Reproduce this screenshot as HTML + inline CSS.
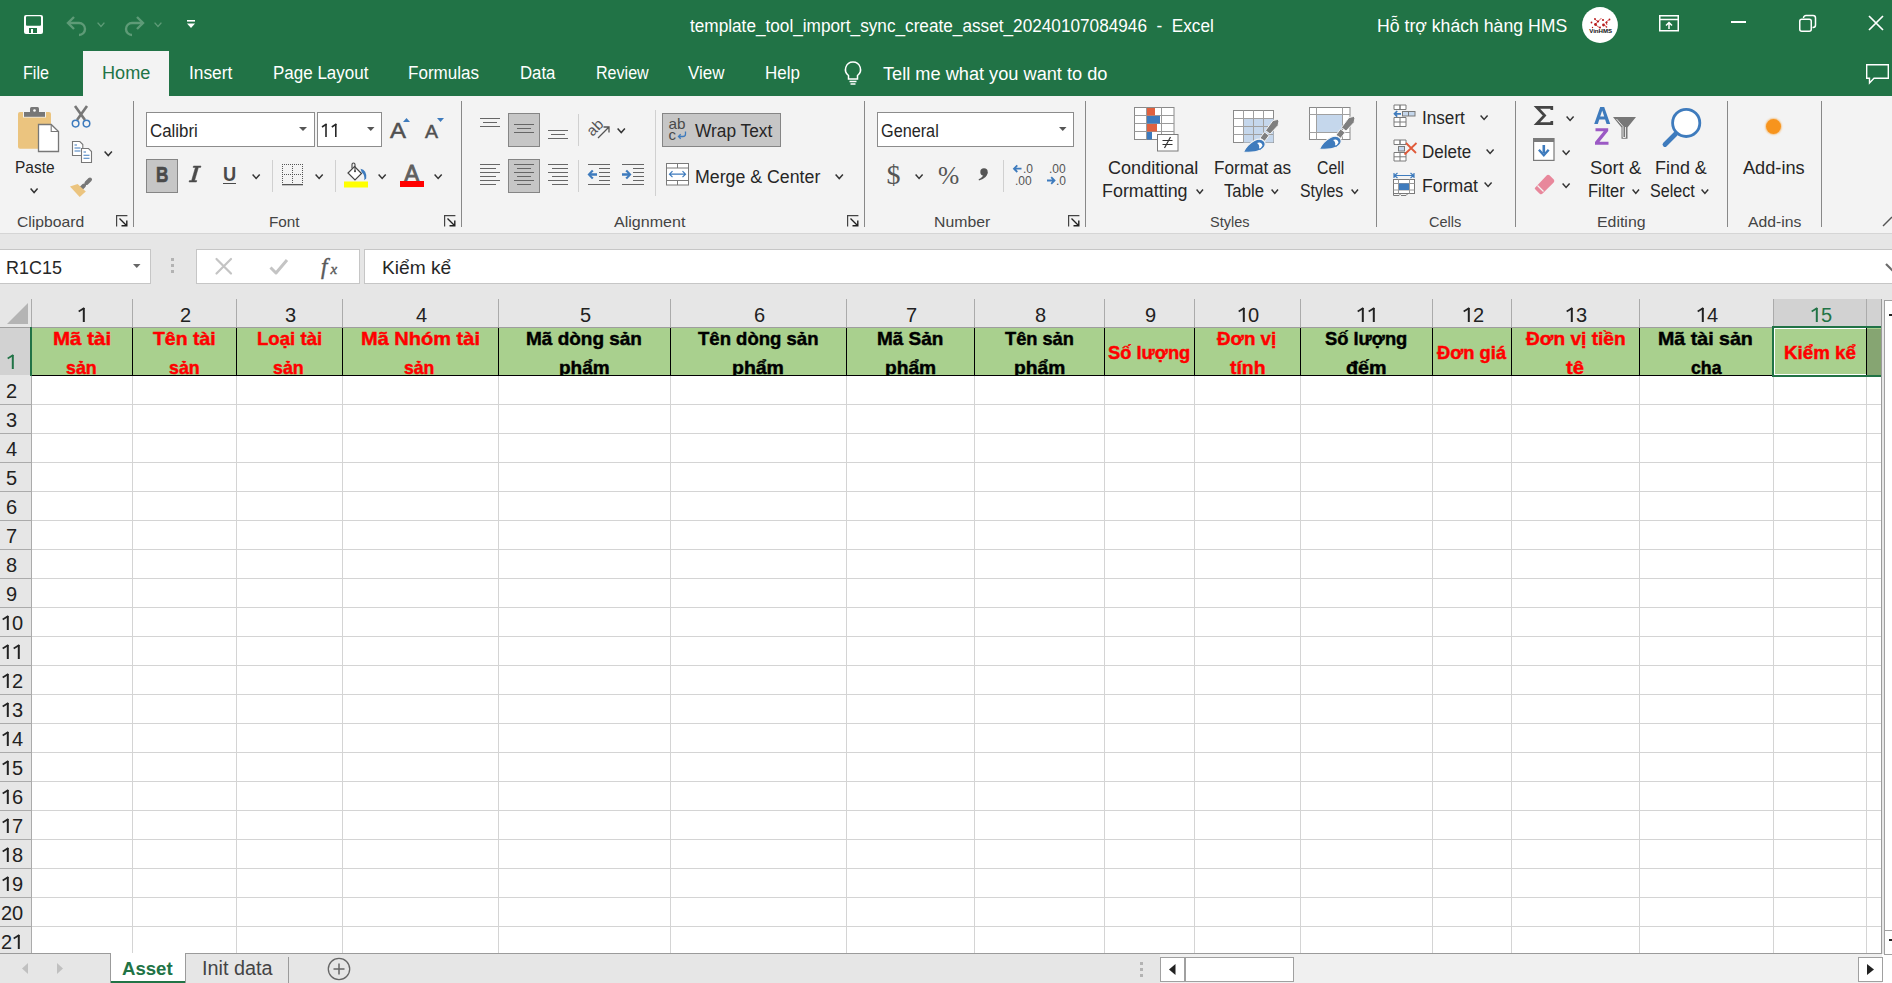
<!DOCTYPE html>
<html><head><meta charset="utf-8"><style>
html,body{margin:0;padding:0;}
body{width:1892px;height:983px;overflow:hidden;position:relative;background:#fff;font-family:"Liberation Sans", sans-serif;}
div{position:absolute;box-sizing:border-box;}
svg text{white-space:pre;}
</style></head><body>
<div style="left:0px;top:0px;width:1892px;height:96px;background:#217346"></div>
<svg style="position:absolute;left:24px;top:15px;overflow:visible;" width="19" height="19" viewBox="0 0 19 19"><rect x="0" y="0" width="19" height="19" rx="2" fill="#fff"/><rect x="2" y="1.2" width="15" height="9.6" rx="1" fill="#217346"/><rect x="5" y="13" width="8" height="5" fill="#217346"/><rect x="7" y="14" width="2" height="4" fill="#fff"/></svg>
<svg style="position:absolute;left:65px;top:15px;overflow:visible;" width="24" height="20" viewBox="0 0 24 20"><path d="M3 8 H14 A6 6 0 0 1 14 20" fill="none" stroke="#5e9b77" stroke-width="2.4"/><path d="M9 2 L3 8 L9 14" fill="none" stroke="#5e9b77" stroke-width="2.4"/></svg>
<svg style="position:absolute;left:97px;top:22px;overflow:visible;" width="8" height="5" viewBox="0 0 8 5"><path d="M0.6 0.6 L4.0 4.4 L7.4 0.6" fill="none" stroke="#5e9b77" stroke-width="1.4"/></svg>
<svg style="position:absolute;left:122px;top:15px;overflow:visible;" width="24" height="20" viewBox="0 0 24 20"><path d="M21 8 H10 A6 6 0 0 0 10 20" fill="none" stroke="#5e9b77" stroke-width="2.4"/><path d="M15 2 L21 8 L15 14" fill="none" stroke="#5e9b77" stroke-width="2.4"/></svg>
<svg style="position:absolute;left:154px;top:22px;overflow:visible;" width="8" height="5" viewBox="0 0 8 5"><path d="M0.6 0.6 L4.0 4.4 L7.4 0.6" fill="none" stroke="#5e9b77" stroke-width="1.4"/></svg>
<svg style="position:absolute;left:187px;top:20px;overflow:visible;" width="9" height="10" viewBox="0 0 9 10"><rect x="0" y="0" width="8" height="1.6" fill="#fff"/><path d="M0 3.5 H8 L4 8 Z" fill="#fff"/></svg>
<svg style="position:absolute;left:688.40px;top:11.00px;overflow:visible" width="527.8" height="28.0"><text x="2" y="21.00" font-size="17.5" font-family="Liberation Sans" font-weight="normal" fill="#fff" textLength="523.84" lengthAdjust="spacingAndGlyphs" >template_tool_import_sync_create_asset_20240107084946&#160;&#160;-&#160;&#160;Excel</text></svg>
<svg style="position:absolute;left:1374.70px;top:10.50px;overflow:visible" width="194.2" height="28.0"><text x="2" y="21.00" font-size="17.5" font-family="Liberation Sans" font-weight="normal" fill="#fff" textLength="190.20" lengthAdjust="spacingAndGlyphs" >Hỗ trợ khách hàng HMS</text></svg>
<svg style="position:absolute;left:1582px;top:7px;overflow:visible;" width="36" height="36" viewBox="0 0 36 36"><circle cx="18" cy="18" r="17.9" fill="#fff"/><path d="M12.5 12 L16 14.5 L19.5 11 M16 14.5 L13 17.5 L18 21 M22 17.5 L24.5 20 M24 15 L27.5 12.5 M24 15 L25 18" stroke="#c62828" stroke-width="0.9" fill="none" opacity="0.85"/><g fill="#b71c1c"><circle cx="9.5" cy="15.5" r="0.9"/><circle cx="13" cy="12" r="0.9"/><circle cx="16" cy="14.5" r="1.1"/><circle cx="13.5" cy="17.5" r="1.4"/><circle cx="18" cy="20.5" r="1"/><circle cx="21" cy="13" r="1.1"/><circle cx="21.5" cy="18" r="1.4"/><circle cx="24.5" cy="20" r="0.8"/><circle cx="24.5" cy="15.5" r="1.1"/><circle cx="27.5" cy="12.5" r="0.9"/><circle cx="10.5" cy="20.5" r="0.7"/></g><text x="7.2" y="26.3" font-size="6.2" font-family="Liberation Sans" font-weight="bold" fill="#111" textLength="23" lengthAdjust="spacingAndGlyphs">VinHMS</text></svg>
<svg style="position:absolute;left:1659px;top:15px;overflow:visible;" width="20" height="17" viewBox="0 0 20 17"><rect x="0.75" y="0.75" width="18.5" height="15" fill="none" stroke="#fff" stroke-width="1.5"/><path d="M0.75 4.5 H19" stroke="#fff" stroke-width="1.5"/><path d="M10 14 V7.5 M7 10.5 L10 7.5 L13 10.5" fill="none" stroke="#fff" stroke-width="1.5"/></svg>
<div style="left:1731px;top:21px;width:15px;height:2px;background:#fff"></div>
<svg style="position:absolute;left:1799px;top:14px;overflow:visible;" width="18" height="19" viewBox="0 0 18 19"><rect x="0.75" y="5.25" width="11.5" height="12" rx="2" fill="none" stroke="#fff" stroke-width="1.5"/><path d="M4.5 4 A2.5 2.5 0 0 1 7 1.5 H14 A2.5 2.5 0 0 1 16.5 4 V11 A2.5 2.5 0 0 1 14 13.5 H13.5" fill="none" stroke="#fff" stroke-width="1.5"/></svg>
<svg style="position:absolute;left:1868px;top:15px;overflow:visible;" width="16" height="16" viewBox="0 0 16 16"><path d="M1 1 L15 15 M15 1 L1 15" stroke="#fff" stroke-width="1.7"/></svg>
<div style="left:83px;top:51px;width:86px;height:45px;background:#f3f3f3"></div>
<svg style="position:absolute;left:21.30px;top:57.20px;overflow:visible" width="30.0" height="28.8"><text x="2" y="21.60" font-size="18" font-family="Liberation Sans" font-weight="normal" fill="#fff" textLength="26.00" lengthAdjust="spacingAndGlyphs" >File</text></svg>
<svg style="position:absolute;left:99.70px;top:57.20px;overflow:visible" width="52.3" height="28.8"><text x="2" y="21.60" font-size="18" font-family="Liberation Sans" font-weight="normal" fill="#217346" textLength="48.31" lengthAdjust="spacingAndGlyphs" >Home</text></svg>
<svg style="position:absolute;left:187.30px;top:57.20px;overflow:visible" width="47.3" height="28.8"><text x="2" y="21.60" font-size="18" font-family="Liberation Sans" font-weight="normal" fill="#fff" textLength="43.32" lengthAdjust="spacingAndGlyphs" >Insert</text></svg>
<svg style="position:absolute;left:270.60px;top:57.20px;overflow:visible" width="99.4" height="28.8"><text x="2" y="21.60" font-size="18" font-family="Liberation Sans" font-weight="normal" fill="#fff" textLength="95.39" lengthAdjust="spacingAndGlyphs" >Page Layout</text></svg>
<svg style="position:absolute;left:405.80px;top:57.20px;overflow:visible" width="75.0" height="28.8"><text x="2" y="21.60" font-size="18" font-family="Liberation Sans" font-weight="normal" fill="#fff" textLength="71.01" lengthAdjust="spacingAndGlyphs" >Formulas</text></svg>
<svg style="position:absolute;left:517.90px;top:57.20px;overflow:visible" width="39.4" height="28.8"><text x="2" y="21.60" font-size="18" font-family="Liberation Sans" font-weight="normal" fill="#fff" textLength="35.43" lengthAdjust="spacingAndGlyphs" >Data</text></svg>
<svg style="position:absolute;left:593.80px;top:57.20px;overflow:visible" width="56.7" height="28.8"><text x="2" y="21.60" font-size="18" font-family="Liberation Sans" font-weight="normal" fill="#fff" textLength="52.73" lengthAdjust="spacingAndGlyphs" >Review</text></svg>
<svg style="position:absolute;left:686.00px;top:57.20px;overflow:visible" width="40.4" height="28.8"><text x="2" y="21.60" font-size="18" font-family="Liberation Sans" font-weight="normal" fill="#fff" textLength="36.40" lengthAdjust="spacingAndGlyphs" >View</text></svg>
<svg style="position:absolute;left:762.70px;top:57.20px;overflow:visible" width="38.9" height="28.8"><text x="2" y="21.60" font-size="18" font-family="Liberation Sans" font-weight="normal" fill="#fff" textLength="34.92" lengthAdjust="spacingAndGlyphs" >Help</text></svg>
<svg style="position:absolute;left:844px;top:61px;overflow:visible;" width="18" height="24" viewBox="0 0 18 24"><path d="M9 1 A7.5 7.5 0 0 0 4.5 14.5 V18 H13.5 V14.5 A7.5 7.5 0 0 0 9 1 Z" fill="none" stroke="#fff" stroke-width="1.5"/><path d="M5.5 20.5 H12.5 M6.5 23 H11.5" stroke="#fff" stroke-width="1.5"/></svg>
<svg style="position:absolute;left:880.60px;top:57.50px;overflow:visible" width="228.4" height="28.8"><text x="2" y="21.60" font-size="18" font-family="Liberation Sans" font-weight="normal" fill="#fff" textLength="224.42" lengthAdjust="spacingAndGlyphs" >Tell me what you want to do</text></svg>
<svg style="position:absolute;left:1866px;top:64px;overflow:visible;" width="23" height="22" viewBox="0 0 23 22"><path d="M0.7 0.7 H22.3 V14.3 H8 L3.5 19 V14.3 H0.7 Z" fill="none" stroke="#fff" stroke-width="1.4"/></svg>
<div style="left:0px;top:96px;width:1892px;height:137px;background:#f3f3f3"></div>
<div style="left:0px;top:233px;width:1892px;height:1px;background:#d5d5d5"></div>
<div style="left:133px;top:101px;width:1px;height:126px;background:#888888"></div>
<div style="left:461px;top:101px;width:1px;height:126px;background:#888888"></div>
<div style="left:864px;top:101px;width:1px;height:126px;background:#888888"></div>
<div style="left:1085px;top:101px;width:1px;height:126px;background:#888888"></div>
<div style="left:1376px;top:101px;width:1px;height:126px;background:#888888"></div>
<div style="left:1515px;top:101px;width:1px;height:126px;background:#888888"></div>
<div style="left:1727px;top:101px;width:1px;height:126px;background:#888888"></div>
<div style="left:1821px;top:101px;width:1px;height:126px;background:#888888"></div>
<svg style="position:absolute;left:14.50px;top:209.00px;overflow:visible" width="71.2" height="24.0"><text x="2" y="18.00" font-size="15" font-family="Liberation Sans" font-weight="normal" fill="#444444" textLength="67.20" lengthAdjust="spacingAndGlyphs" >Clipboard</text></svg>
<svg style="position:absolute;left:267.40px;top:209.00px;overflow:visible" width="34.6" height="24.0"><text x="2" y="18.00" font-size="15" font-family="Liberation Sans" font-weight="normal" fill="#444444" textLength="30.61" lengthAdjust="spacingAndGlyphs" >Font</text></svg>
<svg style="position:absolute;left:612.40px;top:209.00px;overflow:visible" width="75.4" height="24.0"><text x="2" y="18.00" font-size="15" font-family="Liberation Sans" font-weight="normal" fill="#444444" textLength="71.40" lengthAdjust="spacingAndGlyphs" >Alignment</text></svg>
<svg style="position:absolute;left:931.80px;top:209.00px;overflow:visible" width="60.2" height="24.0"><text x="2" y="18.00" font-size="15" font-family="Liberation Sans" font-weight="normal" fill="#444444" textLength="56.25" lengthAdjust="spacingAndGlyphs" >Number</text></svg>
<svg style="position:absolute;left:1208.10px;top:209.00px;overflow:visible" width="43.5" height="24.0"><text x="2" y="18.00" font-size="15" font-family="Liberation Sans" font-weight="normal" fill="#444444" textLength="39.55" lengthAdjust="spacingAndGlyphs" >Styles</text></svg>
<svg style="position:absolute;left:1427.20px;top:209.00px;overflow:visible" width="36.3" height="24.0"><text x="2" y="18.00" font-size="15" font-family="Liberation Sans" font-weight="normal" fill="#444444" textLength="32.34" lengthAdjust="spacingAndGlyphs" >Cells</text></svg>
<svg style="position:absolute;left:1595.00px;top:209.00px;overflow:visible" width="52.6" height="24.0"><text x="2" y="18.00" font-size="15" font-family="Liberation Sans" font-weight="normal" fill="#444444" textLength="48.56" lengthAdjust="spacingAndGlyphs" >Editing</text></svg>
<svg style="position:absolute;left:1745.60px;top:209.00px;overflow:visible" width="57.4" height="24.0"><text x="2" y="18.00" font-size="15" font-family="Liberation Sans" font-weight="normal" fill="#444444" textLength="53.36" lengthAdjust="spacingAndGlyphs" >Add-ins</text></svg>
<svg style="position:absolute;left:116px;top:215px;overflow:visible;" width="12" height="12" viewBox="0 0 12 12"><path d="M0.6 11.4 V0.6 H11.4" fill="none" stroke="#444" stroke-width="1.2"/><path d="M3.5 3.5 L10.5 10.5 M5.5 10.8 H10.8 V5.5" fill="none" stroke="#222" stroke-width="1.4"/></svg>
<svg style="position:absolute;left:444px;top:215px;overflow:visible;" width="12" height="12" viewBox="0 0 12 12"><path d="M0.6 11.4 V0.6 H11.4" fill="none" stroke="#444" stroke-width="1.2"/><path d="M3.5 3.5 L10.5 10.5 M5.5 10.8 H10.8 V5.5" fill="none" stroke="#222" stroke-width="1.4"/></svg>
<svg style="position:absolute;left:847px;top:215px;overflow:visible;" width="12" height="12" viewBox="0 0 12 12"><path d="M0.6 11.4 V0.6 H11.4" fill="none" stroke="#444" stroke-width="1.2"/><path d="M3.5 3.5 L10.5 10.5 M5.5 10.8 H10.8 V5.5" fill="none" stroke="#222" stroke-width="1.4"/></svg>
<svg style="position:absolute;left:1068px;top:215px;overflow:visible;" width="12" height="12" viewBox="0 0 12 12"><path d="M0.6 11.4 V0.6 H11.4" fill="none" stroke="#444" stroke-width="1.2"/><path d="M3.5 3.5 L10.5 10.5 M5.5 10.8 H10.8 V5.5" fill="none" stroke="#222" stroke-width="1.4"/></svg>
<svg style="position:absolute;left:1881px;top:216px;overflow:visible;" width="11" height="11" viewBox="0 0 11 11"><path d="M2 10 L11 1" stroke="#555" stroke-width="1.4"/></svg>
<svg style="position:absolute;left:17px;top:106px;overflow:visible;" width="44" height="47" viewBox="0 0 44 47"><rect x="1" y="6" width="33" height="36.8" rx="2" fill="#ebc47f"/><rect x="6" y="4.5" width="23" height="7" fill="#f3f3f3"/><rect x="7" y="6" width="21" height="4.8" fill="#777777"/><rect x="13" y="1" width="9" height="6" rx="1.5" fill="#777777"/><circle cx="17.5" cy="4.5" r="1.3" fill="#fff"/><path d="M21.5 18.5 H34.2 L41.5 25.5 V45.5 H21.5 Z" fill="#fff" stroke="#777777" stroke-width="1.3"/><path d="M34.2 18.5 V25.5 H41.5" fill="none" stroke="#777777" stroke-width="1.1"/></svg>
<svg style="position:absolute;left:13.10px;top:153.30px;overflow:visible" width="43.6" height="27.2"><text x="2" y="20.40" font-size="17" font-family="Liberation Sans" font-weight="normal" fill="#262626" textLength="39.57" lengthAdjust="spacingAndGlyphs" >Paste</text></svg>
<svg style="position:absolute;left:30.1px;top:187.8px;overflow:visible;" width="8.2" height="5.2" viewBox="0 0 8.2 5.2"><path d="M0.6 0.6 L4.1 4.6000000000000005 L7.6 0.6" fill="none" stroke="#333" stroke-width="1.5"/></svg>
<svg style="position:absolute;left:70px;top:105px;overflow:visible;" width="22" height="24" viewBox="0 0 22 24"><path d="M5 1 L15 15 M17 1 L7 15" stroke="#777777" stroke-width="2.6"/><circle cx="5.6" cy="18.6" r="3.3" fill="#f3f3f3" stroke="#3e7bbd" stroke-width="1.5"/><circle cx="16.5" cy="18.6" r="3.3" fill="#f3f3f3" stroke="#3e7bbd" stroke-width="1.5"/></svg>
<svg style="position:absolute;left:71px;top:140px;overflow:visible;" width="23" height="24" viewBox="0 0 23 24"><path d="M1.5 1.5 H8.8 L11.8 4.5 V15.5 H1.5 Z" fill="#fff" stroke="#777777" stroke-width="1.1"/><path d="M3.5 5 H6 M3.5 8 H9.5 M3.5 11 H9.5" stroke="#3e7bbd" stroke-width="1.1"/><path d="M10.5 8.5 H17.5 L20.5 11.5 V22.5 H10.5 Z" fill="#fff" stroke="#777777" stroke-width="1.1"/><path d="M12.5 12 H15 M12.5 15.2 H18.5 M12.5 18.2 H18.5" stroke="#3e7bbd" stroke-width="1.1"/></svg>
<svg style="position:absolute;left:104px;top:150.8px;overflow:visible;" width="8.5" height="5.2" viewBox="0 0 8.5 5.2"><path d="M0.6 0.6 L4.25 4.6000000000000005 L7.9 0.6" fill="none" stroke="#333" stroke-width="1.5"/></svg>
<svg style="position:absolute;left:69px;top:177px;overflow:visible;" width="24" height="22" viewBox="0 0 24 22"><path d="M21 2.5 L17.5 6 M15 8.5 L10.5 13" stroke="#777777" stroke-width="4" stroke-linecap="round"/><path d="M1 9.4 L8.6 6.9 L16.8 14.5 L10.7 20.1 Z" fill="#ebc47f"/></svg>
<div style="left:146px;top:112px;width:169px;height:35px;background:#fff;border:1px solid #8c8c8c"></div>
<svg style="position:absolute;left:147.60px;top:116.00px;overflow:visible" width="51.9" height="28.0"><text x="2" y="21.00" font-size="17.5" font-family="Liberation Sans" font-weight="normal" fill="#262626" textLength="47.89" lengthAdjust="spacingAndGlyphs" >Calibri</text></svg>
<svg style="position:absolute;left:299px;top:127px;overflow:visible;" width="8" height="4" viewBox="0 0 8 4"><path d="M0 0 H8 L4.0 4 Z" fill="#555"/></svg>
<div style="left:317px;top:112px;width:65px;height:35px;background:#fff;border:1px solid #8c8c8c"></div>
<svg style="position:absolute;left:320px;top:122px;overflow:visible;" width="20" height="16" viewBox="0 0 20 16"><path d="M6 2 V15 M15.8 2 V15" stroke="#262626" stroke-width="1.6"/><path d="M2 5 L6.6 2 M11.8 5 L16.4 2" stroke="#262626" stroke-width="1.5"/></svg>
<svg style="position:absolute;left:367px;top:127px;overflow:visible;" width="7.5" height="4" viewBox="0 0 7.5 4"><path d="M0 0 H7.5 L3.75 4 Z" fill="#555"/></svg>
<svg style="position:absolute;left:388.00px;top:111.60px;overflow:visible" width="20.0" height="35.2"><text x="2" y="26.40" font-size="22" font-family="Liberation Sans" font-weight="normal" fill="#505050" textLength="15.97" lengthAdjust="spacingAndGlyphs" stroke="#505050" stroke-width="0.5">A</text></svg>
<svg style="position:absolute;left:403px;top:118px;overflow:visible;" width="7" height="4" viewBox="0 0 7 4"><path d="M0 4 L3.5 0 L7 4 Z" fill="#3e7bbd"/></svg>
<svg style="position:absolute;left:423.00px;top:116.40px;overflow:visible" width="17.0" height="28.8"><text x="2" y="21.60" font-size="18" font-family="Liberation Sans" font-weight="normal" fill="#505050" textLength="13.01" lengthAdjust="spacingAndGlyphs" stroke="#505050" stroke-width="0.5">A</text></svg>
<svg style="position:absolute;left:437px;top:118px;overflow:visible;" width="7" height="4" viewBox="0 0 7 4"><path d="M0 0 H7 L3.5 4 Z" fill="#3e7bbd"/></svg>
<div style="left:146px;top:159px;width:32px;height:34px;background:#c6c6c6;border:1px solid #858585"></div>
<svg style="position:absolute;left:153.80px;top:155.60px;overflow:visible" width="16.4" height="35.2"><text x="2" y="26.40" font-size="22" font-family="Liberation Sans" font-weight="bold" fill="#4a4a4a" textLength="12.39" lengthAdjust="spacingAndGlyphs" stroke="#4a4a4a" stroke-width="0.6">B</text></svg>
<svg style="position:absolute;left:188px;top:165px;overflow:visible;" width="14" height="18" viewBox="0 0 14 18"><path d="M5.5 1 H13 L12.6 2.4 H10.4 L6.6 15.6 H8.8 L8.4 17 H1 L1.4 15.6 H3.6 L7.4 2.4 H5.1 Z" fill="#4a4a4a" stroke="#4a4a4a" stroke-width="0.5"/></svg>
<svg style="position:absolute;left:220.80px;top:156.30px;overflow:visible" width="17.2" height="33.6"><text x="2" y="25.20" font-size="21" font-family="Liberation Sans" font-weight="bold" fill="#4a4a4a" textLength="13.17" lengthAdjust="spacingAndGlyphs" >U</text></svg>
<div style="left:223px;top:182.5px;width:13px;height:1.6px;background:#4a4a4a"></div>
<svg style="position:absolute;left:252px;top:174.2px;overflow:visible;" width="8.3" height="5" viewBox="0 0 8.3 5"><path d="M0.6 0.6 L4.15 4.4 L7.700000000000001 0.6" fill="none" stroke="#333" stroke-width="1.5"/></svg>
<div style="left:272px;top:160px;width:1px;height:32px;background:#d0d0d0"></div>
<svg style="position:absolute;left:282px;top:164px;overflow:visible;" width="22" height="22" viewBox="0 0 22 22"><rect x="0" y="0" width="1" height="1" fill="#555"/><rect x="0" y="10" width="1" height="1" fill="#555"/><rect x="0" y="0" width="1" height="1" fill="#555"/><rect x="10" y="0" width="1" height="1" fill="#555"/><rect x="20" y="0" width="1" height="1" fill="#555"/><rect x="2" y="0" width="1" height="1" fill="#555"/><rect x="2" y="10" width="1" height="1" fill="#555"/><rect x="0" y="2" width="1" height="1" fill="#555"/><rect x="10" y="2" width="1" height="1" fill="#555"/><rect x="20" y="2" width="1" height="1" fill="#555"/><rect x="4" y="0" width="1" height="1" fill="#555"/><rect x="4" y="10" width="1" height="1" fill="#555"/><rect x="0" y="4" width="1" height="1" fill="#555"/><rect x="10" y="4" width="1" height="1" fill="#555"/><rect x="20" y="4" width="1" height="1" fill="#555"/><rect x="6" y="0" width="1" height="1" fill="#555"/><rect x="6" y="10" width="1" height="1" fill="#555"/><rect x="0" y="6" width="1" height="1" fill="#555"/><rect x="10" y="6" width="1" height="1" fill="#555"/><rect x="20" y="6" width="1" height="1" fill="#555"/><rect x="8" y="0" width="1" height="1" fill="#555"/><rect x="8" y="10" width="1" height="1" fill="#555"/><rect x="0" y="8" width="1" height="1" fill="#555"/><rect x="10" y="8" width="1" height="1" fill="#555"/><rect x="20" y="8" width="1" height="1" fill="#555"/><rect x="10" y="0" width="1" height="1" fill="#555"/><rect x="10" y="10" width="1" height="1" fill="#555"/><rect x="0" y="10" width="1" height="1" fill="#555"/><rect x="10" y="10" width="1" height="1" fill="#555"/><rect x="20" y="10" width="1" height="1" fill="#555"/><rect x="12" y="0" width="1" height="1" fill="#555"/><rect x="12" y="10" width="1" height="1" fill="#555"/><rect x="0" y="12" width="1" height="1" fill="#555"/><rect x="10" y="12" width="1" height="1" fill="#555"/><rect x="20" y="12" width="1" height="1" fill="#555"/><rect x="14" y="0" width="1" height="1" fill="#555"/><rect x="14" y="10" width="1" height="1" fill="#555"/><rect x="0" y="14" width="1" height="1" fill="#555"/><rect x="10" y="14" width="1" height="1" fill="#555"/><rect x="20" y="14" width="1" height="1" fill="#555"/><rect x="16" y="0" width="1" height="1" fill="#555"/><rect x="16" y="10" width="1" height="1" fill="#555"/><rect x="0" y="16" width="1" height="1" fill="#555"/><rect x="10" y="16" width="1" height="1" fill="#555"/><rect x="20" y="16" width="1" height="1" fill="#555"/><rect x="18" y="0" width="1" height="1" fill="#555"/><rect x="18" y="10" width="1" height="1" fill="#555"/><rect x="0" y="18" width="1" height="1" fill="#555"/><rect x="10" y="18" width="1" height="1" fill="#555"/><rect x="20" y="18" width="1" height="1" fill="#555"/><rect x="20" y="0" width="1" height="1" fill="#555"/><rect x="20" y="10" width="1" height="1" fill="#555"/><rect x="0" y="20" width="1" height="1" fill="#555"/><rect x="10" y="20" width="1" height="1" fill="#555"/><rect x="20" y="20" width="1" height="1" fill="#555"/><rect x="0" y="20" width="21" height="1.3" fill="#555"/></svg>
<svg style="position:absolute;left:315px;top:174.2px;overflow:visible;" width="8.3" height="5" viewBox="0 0 8.3 5"><path d="M0.6 0.6 L4.15 4.4 L7.700000000000001 0.6" fill="none" stroke="#333" stroke-width="1.5"/></svg>
<div style="left:335px;top:160px;width:1px;height:32px;background:#d0d0d0"></div>
<svg style="position:absolute;left:344px;top:162px;overflow:visible;" width="26" height="26" viewBox="0 0 26 26"><path d="M10.5 4.5 L17.5 11.5 L11 18 L4 11 Z" fill="#fff" stroke="#444" stroke-width="1.2"/><path d="M8 6.5 V2.5 A1.5 1.5 0 0 1 11 2.5 V9" fill="none" stroke="#444" stroke-width="1.1"/><circle cx="11" cy="9.3" r="1" fill="#444"/><path d="M16.5 6.8 Q23 8 22.2 16.5 L20.2 18.3 Q21 12.5 17.8 10.5 Z" fill="#3e7bbd"/><rect x="0" y="19.5" width="24" height="6" fill="#ffff00"/></svg>
<svg style="position:absolute;left:378px;top:174.2px;overflow:visible;" width="8.3" height="5" viewBox="0 0 8.3 5"><path d="M0.6 0.6 L4.15 4.4 L7.700000000000001 0.6" fill="none" stroke="#333" stroke-width="1.5"/></svg>
<svg style="position:absolute;left:402.00px;top:153.20px;overflow:visible" width="19.5" height="38.4"><text x="2" y="28.80" font-size="24" font-family="Liberation Sans" font-weight="normal" fill="#606060" textLength="15.51" lengthAdjust="spacingAndGlyphs" stroke="#606060" stroke-width="0.9">A</text></svg>
<div style="left:400px;top:181px;width:24px;height:6px;background:#ff0000"></div>
<svg style="position:absolute;left:434px;top:174.2px;overflow:visible;" width="8.3" height="5" viewBox="0 0 8.3 5"><path d="M0.6 0.6 L4.15 4.4 L7.700000000000001 0.6" fill="none" stroke="#333" stroke-width="1.5"/></svg>
<div style="left:508px;top:113px;width:32px;height:34px;background:#c6c6c6;border:1px solid #858585"></div>
<div style="left:508px;top:159px;width:32px;height:34px;background:#c6c6c6;border:1px solid #858585"></div>
<div style="left:480px;top:118px;width:20px;height:1px;background:#666666"></div>
<div style="left:483px;top:122px;width:14px;height:1px;background:#666666"></div>
<div style="left:480px;top:126px;width:20px;height:1px;background:#666666"></div>
<div style="left:514px;top:124px;width:20px;height:1px;background:#666666"></div>
<div style="left:517px;top:128px;width:14px;height:1px;background:#666666"></div>
<div style="left:514px;top:132px;width:20px;height:1px;background:#666666"></div>
<div style="left:548px;top:130px;width:20px;height:1px;background:#666666"></div>
<div style="left:551px;top:134px;width:14px;height:1px;background:#666666"></div>
<div style="left:548px;top:138px;width:20px;height:1px;background:#666666"></div>
<div style="left:578px;top:114px;width:1px;height:32px;background:#d0d0d0"></div>
<svg style="position:absolute;left:586px;top:118px;overflow:visible;" width="26" height="24" viewBox="0 0 26 24"><text x="0" y="0" font-size="15" font-family="Liberation Sans" fill="#555" transform="translate(6.5 19) rotate(-45)">ab</text><path d="M12 20 L23 9 M17.5 9 H23 V14.5" fill="none" stroke="#555" stroke-width="1.3"/></svg>
<svg style="position:absolute;left:617px;top:127.5px;overflow:visible;" width="8.5" height="5.2" viewBox="0 0 8.5 5.2"><path d="M0.6 0.6 L4.25 4.6000000000000005 L7.9 0.6" fill="none" stroke="#333" stroke-width="1.5"/></svg>
<div style="left:655px;top:110px;width:1px;height:86px;background:#d0d0d0"></div>
<div style="left:662px;top:113px;width:119px;height:34px;background:#c6c6c6;border:1px solid #858585"></div>
<svg style="position:absolute;left:668px;top:116px;overflow:visible;" width="24" height="26" viewBox="0 0 24 26"><text x="0.5" y="13" font-size="15" font-family="Liberation Sans" fill="#4a4a4a" textLength="17" lengthAdjust="spacingAndGlyphs">ab</text><text x="0.5" y="23.5" font-size="15" font-family="Liberation Sans" fill="#4a4a4a">c</text><path d="M17.5 15.5 V18 Q17.5 20.5 15 20.5 H10.5 M12.7 18.3 L10.5 20.5 L12.7 22.7" fill="none" stroke="#3e7bbd" stroke-width="1.3"/></svg>
<svg style="position:absolute;left:692.70px;top:115.60px;overflow:visible" width="81.3" height="28.0"><text x="2" y="21.00" font-size="17.5" font-family="Liberation Sans" font-weight="normal" fill="#262626" textLength="77.34" lengthAdjust="spacingAndGlyphs" >Wrap Text</text></svg>
<div style="left:480px;top:164px;width:20px;height:1px;background:#666666"></div>
<div style="left:514px;top:164px;width:20px;height:1px;background:#666666"></div>
<div style="left:548px;top:164px;width:20px;height:1px;background:#666666"></div>
<div style="left:480px;top:168px;width:16px;height:1px;background:#666666"></div>
<div style="left:517px;top:168px;width:14px;height:1px;background:#666666"></div>
<div style="left:552px;top:168px;width:16px;height:1px;background:#666666"></div>
<div style="left:480px;top:172px;width:20px;height:1px;background:#666666"></div>
<div style="left:514px;top:172px;width:20px;height:1px;background:#666666"></div>
<div style="left:548px;top:172px;width:20px;height:1px;background:#666666"></div>
<div style="left:480px;top:176px;width:16px;height:1px;background:#666666"></div>
<div style="left:517px;top:176px;width:14px;height:1px;background:#666666"></div>
<div style="left:552px;top:176px;width:16px;height:1px;background:#666666"></div>
<div style="left:480px;top:180px;width:20px;height:1px;background:#666666"></div>
<div style="left:514px;top:180px;width:20px;height:1px;background:#666666"></div>
<div style="left:548px;top:180px;width:20px;height:1px;background:#666666"></div>
<div style="left:480px;top:184px;width:16px;height:1px;background:#666666"></div>
<div style="left:517px;top:184px;width:14px;height:1px;background:#666666"></div>
<div style="left:552px;top:184px;width:16px;height:1px;background:#666666"></div>
<div style="left:578px;top:160px;width:1px;height:32px;background:#d0d0d0"></div>
<div style="left:588px;top:164px;width:22px;height:1px;background:#666666"></div>
<div style="left:622px;top:164px;width:22px;height:1px;background:#666666"></div>
<div style="left:599px;top:168px;width:11px;height:1px;background:#666666"></div>
<div style="left:633px;top:168px;width:11px;height:1px;background:#666666"></div>
<div style="left:599px;top:172px;width:11px;height:1px;background:#666666"></div>
<div style="left:633px;top:172px;width:11px;height:1px;background:#666666"></div>
<div style="left:599px;top:176px;width:11px;height:1px;background:#666666"></div>
<div style="left:633px;top:176px;width:11px;height:1px;background:#666666"></div>
<div style="left:599px;top:180px;width:11px;height:1px;background:#666666"></div>
<div style="left:633px;top:180px;width:11px;height:1px;background:#666666"></div>
<div style="left:588px;top:184px;width:22px;height:1px;background:#666666"></div>
<div style="left:622px;top:184px;width:22px;height:1px;background:#666666"></div>
<svg style="position:absolute;left:587px;top:169px;overflow:visible;" width="11" height="11" viewBox="0 0 11 11"><path d="M0.5 5.5 L5 0.8 L6.6 2.3 L4.3 4.3 H10 V6.7 H4.3 L6.6 8.7 L5 10.2 Z" fill="#3e7bbd"/></svg>
<svg style="position:absolute;left:621px;top:169px;overflow:visible;" width="11" height="11" viewBox="0 0 11 11"><path d="M10.5 5.5 L6 0.8 L4.4 2.3 L6.7 4.3 H1 V6.7 H6.7 L4.4 8.7 L6 10.2 Z" fill="#3e7bbd"/></svg>
<svg style="position:absolute;left:666px;top:163px;overflow:visible;" width="23" height="23" viewBox="0 0 23 23"><rect x="0.5" y="0.5" width="22" height="21.5" fill="#fff" stroke="#7a7a7a"/><path d="M0.5 5 H22.5 M0.5 17.5 H22.5 M11.5 0.5 V5 M11.5 17.5 V22" stroke="#7a7a7a"/><path d="M3.5 11.2 H19.5 M6.5 8.2 L3.5 11.2 L6.5 14.2 M16.5 8.2 L19.5 11.2 L16.5 14.2" fill="none" stroke="#3e7bbd" stroke-width="1.2"/></svg>
<svg style="position:absolute;left:692.70px;top:161.70px;overflow:visible" width="129.3" height="28.0"><text x="2" y="21.00" font-size="17.5" font-family="Liberation Sans" font-weight="normal" fill="#262626" textLength="125.33" lengthAdjust="spacingAndGlyphs" >Merge &amp; Center</text></svg>
<svg style="position:absolute;left:835px;top:174px;overflow:visible;" width="8.5" height="5.2" viewBox="0 0 8.5 5.2"><path d="M0.6 0.6 L4.25 4.6000000000000005 L7.9 0.6" fill="none" stroke="#333" stroke-width="1.5"/></svg>
<div style="left:877px;top:112px;width:197px;height:35px;background:#fff;border:1px solid #8c8c8c"></div>
<svg style="position:absolute;left:878.70px;top:116.00px;overflow:visible" width="61.8" height="28.0"><text x="2" y="21.00" font-size="17.5" font-family="Liberation Sans" font-weight="normal" fill="#262626" textLength="57.76" lengthAdjust="spacingAndGlyphs" >General</text></svg>
<svg style="position:absolute;left:1059px;top:127px;overflow:visible;" width="7.5" height="4" viewBox="0 0 7.5 4"><path d="M0 0 H7.5 L3.75 4 Z" fill="#555"/></svg>
<svg style="position:absolute;left:884px;top:158px" width="22" height="32"><text x="2.5" y="26" font-size="28" font-family="Liberation Serif" fill="#555">$</text></svg>
<svg style="position:absolute;left:915.2px;top:174px;overflow:visible;" width="8.2" height="5" viewBox="0 0 8.2 5"><path d="M0.6 0.6 L4.1 4.4 L7.6 0.6" fill="none" stroke="#333" stroke-width="1.5"/></svg>
<svg style="position:absolute;left:935px;top:158px" width="28" height="32"><text x="3" y="26" font-size="25.5" font-family="Liberation Serif" fill="#555">%</text></svg>
<svg style="position:absolute;left:978px;top:168px;overflow:visible;" width="10" height="13" viewBox="0 0 10 13"><circle cx="6" cy="4" r="3.7" fill="#555"/><path d="M9.6 4 Q9.6 10 1 12.5 L0.6 11.3 Q5 9 5.5 6.5 Z" fill="#555"/></svg>
<div style="left:1003px;top:160px;width:1px;height:32px;background:#d0d0d0"></div>
<svg style="position:absolute;left:1012px;top:163px;overflow:visible;" width="24" height="24" viewBox="0 0 24 24"><path d="M9.5 5.7 H2 M5.3 2.4 L2 5.7 L5.3 9" fill="none" stroke="#3e7bbd" stroke-width="1.8"/><text x="11" y="10" font-size="12" font-family="Liberation Sans" fill="#555">.0</text><text x="3" y="22" font-size="12" font-family="Liberation Sans" fill="#555">.00</text></svg>
<svg style="position:absolute;left:1046px;top:163px;overflow:visible;" width="24" height="24" viewBox="0 0 24 24"><text x="3" y="10" font-size="12" font-family="Liberation Sans" fill="#555">.00</text><path d="M1 17.5 H8.5 M5.2 14.2 L8.5 17.5 L5.2 20.8" fill="none" stroke="#3e7bbd" stroke-width="1.8"/><text x="10" y="22" font-size="12" font-family="Liberation Sans" fill="#555">.0</text></svg>
<svg style="position:absolute;left:1134px;top:107px;overflow:visible;" width="45" height="45" viewBox="0 0 45 45"><rect x="0.5" y="0.5" width="39.5" height="32" fill="#fff" stroke="#8a8a8a"/><path d="M0.5 8.5 H40 M0.5 16.5 H40 M0.5 24.5 H40 M12.5 0.5 V32.5 M27.5 0.5 V32.5" stroke="#9a9a9a"/><rect x="13" y="1" width="8" height="7.5" fill="#e0613f"/><rect x="13" y="9" width="13" height="7.5" fill="#3e7bbd"/><rect x="13" y="17" width="10" height="7.5" fill="#e0613f"/><rect x="13" y="25" width="5" height="7.5" fill="#3e7bbd"/><rect x="23.5" y="27.5" width="20.5" height="16.5" fill="#fff" stroke="#7a7a7a"/><path d="M28.5 33.5 H38.5 M28.5 37.5 H38.5 M36.5 30 L30.5 41" stroke="#333" stroke-width="1.2"/></svg>
<svg style="position:absolute;left:1106.40px;top:152.80px;overflow:visible" width="94.4" height="28.0"><text x="2" y="21.00" font-size="17.5" font-family="Liberation Sans" font-weight="normal" fill="#262626" textLength="90.36" lengthAdjust="spacingAndGlyphs" >Conditional</text></svg>
<svg style="position:absolute;left:1100.30px;top:176.20px;overflow:visible" width="89.5" height="28.0"><text x="2" y="21.00" font-size="17.5" font-family="Liberation Sans" font-weight="normal" fill="#262626" textLength="85.54" lengthAdjust="spacingAndGlyphs" >Formatting</text></svg>
<svg style="position:absolute;left:1195.8px;top:188.5px;overflow:visible;" width="7.6" height="5" viewBox="0 0 7.6 5"><path d="M0.6 0.6 L3.8 4.4 L7.0 0.6" fill="none" stroke="#333" stroke-width="1.5"/></svg>
<svg style="position:absolute;left:1233px;top:108px;overflow:visible;" width="48" height="46" viewBox="0 0 48 46"><rect x="0.5" y="2.5" width="40" height="32" fill="#fff" stroke="#8a8a8a"/><rect x="10.5" y="10.5" width="30" height="24" fill="#c5d7ec"/><path d="M0.5 10.5 H40 M0.5 18.5 H40 M0.5 26.5 H40 M10.5 2.5 V34 M20.5 2.5 V34 M30.5 2.5 V34" stroke="#a0a0a0"/><path d="M46 13 L44.5 11.5 L40 12.5 L32.5 22.5 L37 26 L45 17.5 Z" fill="#7f7f7f" stroke="#f3f3f3" stroke-width="1"/><path d="M31.5 24 L36 27.5 L31.5 33.5 L27 30 Z" fill="#7f7f7f" stroke="#f3f3f3" stroke-width="1"/><path d="M10.5 44 Q14 36.5 21.5 32.5 Q27.5 29.5 31.5 33.5 Q34 38.5 28 42 Q21 45 10.5 44 Z" fill="#3e7bbd" stroke="#f3f3f3" stroke-width="1.2"/><path d="M24 35 Q28.5 33.5 29.5 37.5 Q28.5 40 26 40.5 Q27 37 24 35 Z" fill="#fff"/></svg>
<svg style="position:absolute;left:1211.90px;top:152.80px;overflow:visible" width="81.2" height="28.0"><text x="2" y="21.00" font-size="17.5" font-family="Liberation Sans" font-weight="normal" fill="#262626" textLength="77.17" lengthAdjust="spacingAndGlyphs" >Format as</text></svg>
<svg style="position:absolute;left:1222.10px;top:176.20px;overflow:visible" width="43.9" height="28.0"><text x="2" y="21.00" font-size="17.5" font-family="Liberation Sans" font-weight="normal" fill="#262626" textLength="39.93" lengthAdjust="spacingAndGlyphs" >Table</text></svg>
<svg style="position:absolute;left:1270.6px;top:188.5px;overflow:visible;" width="7.6" height="5" viewBox="0 0 7.6 5"><path d="M0.6 0.6 L3.8 4.4 L7.0 0.6" fill="none" stroke="#333" stroke-width="1.5"/></svg>
<svg style="position:absolute;left:1309px;top:107px;overflow:visible;" width="48" height="46" viewBox="0 0 48 46"><rect x="0.5" y="0.5" width="40.5" height="32" fill="#fff" stroke="#8a8a8a"/><rect x="7.5" y="7.5" width="26" height="18" fill="#c5d7ec"/><path d="M0.5 7.5 H41 M0.5 25.5 H41 M7.5 0.5 V32.5 M33.5 0.5 V32.5" stroke="#a0a0a0"/><path d="M46 11 L44.5 9.5 L40 10.5 L32.5 20.5 L37 24 L45 15.5 Z" fill="#7f7f7f" stroke="#f3f3f3" stroke-width="1"/><path d="M31.5 22 L36 25.5 L31.5 31.5 L27 28 Z" fill="#7f7f7f" stroke="#f3f3f3" stroke-width="1"/><path d="M10.5 42 Q14 34.5 21.5 30.5 Q27.5 27.5 31.5 31.5 Q34 36.5 28 40 Q21 43 10.5 42 Z" fill="#3e7bbd" stroke="#f3f3f3" stroke-width="1.2"/><path d="M24 33 Q28.5 31.5 29.5 35.5 Q28.5 38 26 38.5 Q27 35 24 33 Z" fill="#fff"/></svg>
<svg style="position:absolute;left:1314.50px;top:152.80px;overflow:visible" width="31.2" height="28.0"><text x="2" y="21.00" font-size="17.5" font-family="Liberation Sans" font-weight="normal" fill="#262626" textLength="27.24" lengthAdjust="spacingAndGlyphs" >Cell</text></svg>
<svg style="position:absolute;left:1297.70px;top:176.20px;overflow:visible" width="47.2" height="28.0"><text x="2" y="21.00" font-size="17.5" font-family="Liberation Sans" font-weight="normal" fill="#262626" textLength="43.16" lengthAdjust="spacingAndGlyphs" >Styles</text></svg>
<svg style="position:absolute;left:1350.6px;top:188.5px;overflow:visible;" width="7.6" height="5" viewBox="0 0 7.6 5"><path d="M0.6 0.6 L3.8 4.4 L7.0 0.6" fill="none" stroke="#333" stroke-width="1.5"/></svg>
<svg style="position:absolute;left:1393px;top:104px;overflow:visible;" width="24" height="24" viewBox="0 0 24 24"><path d="M1 1 H7 V5.5 H1 Z M7 1 H13 V5.5 H7 Z" fill="#fff" stroke="#7a7a7a"/><path d="M1 13.5 H13 V22.5 H1 Z M1 18 H13 M7 13.5 V22.5" fill="#fff" stroke="#7a7a7a"/><rect x="9.5" y="7.5" width="12.5" height="4.5" fill="#c5d7ec" stroke="#7a7a7a"/><path d="M15.5 7.5 V12" stroke="#7a7a7a"/><path d="M8 9.8 H1.5 M4.2 7 L1.5 9.8 L4.2 12.6" fill="none" stroke="#3e7bbd" stroke-width="1.7"/></svg>
<svg style="position:absolute;left:1419.70px;top:103.10px;overflow:visible" width="46.9" height="28.0"><text x="2" y="21.00" font-size="17.5" font-family="Liberation Sans" font-weight="normal" fill="#262626" textLength="42.87" lengthAdjust="spacingAndGlyphs" >Insert</text></svg>
<svg style="position:absolute;left:1480.2px;top:115px;overflow:visible;" width="8.2" height="5" viewBox="0 0 8.2 5"><path d="M0.6 0.6 L4.1 4.4 L7.6 0.6" fill="none" stroke="#333" stroke-width="1.5"/></svg>
<svg style="position:absolute;left:1393px;top:139px;overflow:visible;" width="25" height="23" viewBox="0 0 25 23"><path d="M1 1 H7 V5.5 H1 Z M7 1 H13 V5.5 H7 Z" fill="#fff" stroke="#7a7a7a"/><path d="M1 13.5 H13 V22 H1 Z M1 17.8 H13 M7 13.5 V22" fill="#fff" stroke="#7a7a7a"/><rect x="5.5" y="7.5" width="6" height="4.5" fill="#c5d7ec" stroke="#7a7a7a"/><path d="M11.5 15.5 L23.5 4 M13 4 L23 14" stroke="#e05a3a" stroke-width="1.8"/></svg>
<svg style="position:absolute;left:1419.70px;top:137.00px;overflow:visible" width="53.2" height="28.0"><text x="2" y="21.00" font-size="17.5" font-family="Liberation Sans" font-weight="normal" fill="#262626" textLength="49.19" lengthAdjust="spacingAndGlyphs" >Delete</text></svg>
<svg style="position:absolute;left:1486.3px;top:148.8px;overflow:visible;" width="8.2" height="5" viewBox="0 0 8.2 5"><path d="M0.6 0.6 L4.1 4.4 L7.6 0.6" fill="none" stroke="#333" stroke-width="1.5"/></svg>
<svg style="position:absolute;left:1393px;top:172px;overflow:visible;" width="24" height="24" viewBox="0 0 24 24"><path d="M1.5 3.5 H20.5 M1 1 V6 M21 1 V6 M4.5 1 L1.5 3.5 L4.5 6 M17.5 1 L20.5 3.5 L17.5 6" fill="none" stroke="#3e7bbd" stroke-width="1.2"/><rect x="0.5" y="7.5" width="21" height="14" fill="#fff" stroke="#7a7a7a"/><path d="M0.5 11.5 H21.5 M0.5 18 H21.5 M5.5 7.5 V21.5 M16.5 7.5 V21.5" stroke="#9a9a9a"/><rect x="6" y="11.5" width="10" height="6.5" fill="#3e7bbd"/><path d="M0.5 21.5 V23.5 H6 L8 21.5 M8 23.5 H13 L15 21.5" fill="none" stroke="#7a7a7a"/></svg>
<svg style="position:absolute;left:1419.70px;top:170.60px;overflow:visible" width="60.0" height="28.0"><text x="2" y="21.00" font-size="17.5" font-family="Liberation Sans" font-weight="normal" fill="#262626" textLength="56.02" lengthAdjust="spacingAndGlyphs" >Format</text></svg>
<svg style="position:absolute;left:1484.3px;top:181.9px;overflow:visible;" width="8.2" height="5" viewBox="0 0 8.2 5"><path d="M0.6 0.6 L4.1 4.4 L7.6 0.6" fill="none" stroke="#333" stroke-width="1.5"/></svg>
<svg style="position:absolute;left:1535px;top:106px;overflow:visible;" width="18" height="19" viewBox="0 0 18 19"><path d="M16.8 4 V1.3 H1.8 L9.6 9.5 L1.8 17.7 H16.8 V15" fill="none" stroke="#444" stroke-width="2.7"/></svg>
<svg style="position:absolute;left:1566px;top:116px;overflow:visible;" width="8.2" height="5" viewBox="0 0 8.2 5"><path d="M0.6 0.6 L4.1 4.4 L7.6 0.6" fill="none" stroke="#333" stroke-width="1.5"/></svg>
<svg style="position:absolute;left:1533px;top:138px;overflow:visible;" width="22" height="23" viewBox="0 0 22 23"><rect x="0.6" y="0.6" width="20.4" height="21.8" fill="#fff" stroke="#7a7a7a" stroke-width="1.2"/><rect x="0.6" y="0.6" width="20.4" height="3.4" fill="#7a7a7a"/><path d="M10.8 7 V15" stroke="#3e7bbd" stroke-width="2.6"/><path d="M5 12.5 L10.8 19 L16.6 12.5 L14.8 11 L10.8 15.5 L6.8 11 Z" fill="#3e7bbd"/></svg>
<svg style="position:absolute;left:1562px;top:150px;overflow:visible;" width="8.2" height="5" viewBox="0 0 8.2 5"><path d="M0.6 0.6 L4.1 4.4 L7.6 0.6" fill="none" stroke="#333" stroke-width="1.5"/></svg>
<svg style="position:absolute;left:1534px;top:173.5px;overflow:visible;" width="21" height="21" viewBox="0 0 21 21"><path d="M1.3 13.6 L12.6 1.4 Q14 0 15.5 1.3 L19.8 5.5 Q21 7 19.7 8.4 L8.6 19.6 Q7.2 21 5.7 19.7 L1.4 15.6 Q0 14.3 1.3 13.6 Z" fill="#e8879b"/><path d="M3.5 11.5 L9.5 17.5" stroke="#f3f3f3" stroke-width="1.3"/></svg>
<svg style="position:absolute;left:1562px;top:183px;overflow:visible;" width="8.2" height="5" viewBox="0 0 8.2 5"><path d="M0.6 0.6 L4.1 4.4 L7.6 0.6" fill="none" stroke="#333" stroke-width="1.5"/></svg>
<svg style="position:absolute;left:1590px;top:100px" width="50" height="50"><path d="M4.2 24 L10.2 7 H14.2 L20.2 24 H16.6 L15.1 19.6 H9.3 L7.8 24 Z M10.2 16.6 H14.2 L12.2 10.6 Z" fill="#3e7bbd"/><path d="M5.5 28.3 H18.2 V31 L9.5 41.8 H18.5 V44.8 H5 V42.1 L13.7 31.3 H5.5 Z" fill="#9b59c4"/><path d="M23 17 H46 L37.5 27.5 V38.7 H31.5 V27.5 Z" fill="#777"/><path d="M26.5 19 L33 26.5 V37.5 H35.5 V27" fill="none" stroke="#fff" stroke-width="0.9" opacity="0.9"/></svg>
<svg style="position:absolute;left:1587.50px;top:152.60px;overflow:visible" width="55.3" height="28.0"><text x="2" y="21.00" font-size="17.5" font-family="Liberation Sans" font-weight="normal" fill="#262626" textLength="51.33" lengthAdjust="spacingAndGlyphs" >Sort &amp;</text></svg>
<svg style="position:absolute;left:1586.30px;top:176.40px;overflow:visible" width="40.7" height="28.0"><text x="2" y="21.00" font-size="17.5" font-family="Liberation Sans" font-weight="normal" fill="#262626" textLength="36.69" lengthAdjust="spacingAndGlyphs" >Filter</text></svg>
<svg style="position:absolute;left:1631.8px;top:188.8px;overflow:visible;" width="7.6" height="5" viewBox="0 0 7.6 5"><path d="M0.6 0.6 L3.8 4.4 L7.0 0.6" fill="none" stroke="#333" stroke-width="1.5"/></svg>
<svg style="position:absolute;left:1661px;top:106px;overflow:visible;" width="42" height="42" viewBox="0 0 42 42"><circle cx="25.2" cy="16.9" r="13.6" fill="#fff" stroke="#3e7bbd" stroke-width="2.8"/><path d="M14.5 28 L4 38.5" stroke="#3e7bbd" stroke-width="4.8" stroke-linecap="round"/></svg>
<svg style="position:absolute;left:1652.90px;top:152.60px;overflow:visible" width="55.8" height="28.0"><text x="2" y="21.00" font-size="17.5" font-family="Liberation Sans" font-weight="normal" fill="#262626" textLength="51.78" lengthAdjust="spacingAndGlyphs" >Find &amp;</text></svg>
<svg style="position:absolute;left:1647.70px;top:176.40px;overflow:visible" width="48.7" height="28.0"><text x="2" y="21.00" font-size="17.5" font-family="Liberation Sans" font-weight="normal" fill="#262626" textLength="44.73" lengthAdjust="spacingAndGlyphs" >Select</text></svg>
<svg style="position:absolute;left:1701.2px;top:188.8px;overflow:visible;" width="7.8" height="5" viewBox="0 0 7.8 5"><path d="M0.6 0.6 L3.9 4.4 L7.2 0.6" fill="none" stroke="#333" stroke-width="1.5"/></svg>
<div style="left:1765.5px;top:118.5px;width:15px;height:15px;border-radius:50%;background:#f7941d;box-shadow:0 0 1.5px 1px rgba(247,148,29,0.45)"></div>
<svg style="position:absolute;left:1741.40px;top:152.60px;overflow:visible" width="65.6" height="28.0"><text x="2" y="21.00" font-size="17.5" font-family="Liberation Sans" font-weight="normal" fill="#262626" textLength="61.64" lengthAdjust="spacingAndGlyphs" >Add-ins</text></svg>
<div style="left:0px;top:234px;width:1892px;height:65px;background:#e6e6e6"></div>
<div style="left:-1px;top:249px;width:152px;height:35px;background:#fff;border:1px solid #c6c6c6"></div>
<svg style="position:absolute;left:4.30px;top:253.10px;overflow:visible" width="59.9" height="28.0"><text x="2" y="21.00" font-size="17.5" font-family="Liberation Sans" font-weight="normal" fill="#262626" textLength="55.87" lengthAdjust="spacingAndGlyphs" >R1C15</text></svg>
<svg style="position:absolute;left:133px;top:264px;overflow:visible;" width="7.5" height="4" viewBox="0 0 7.5 4"><path d="M0 0 H7.5 L3.75 4 Z" fill="#666"/></svg>
<div style="left:171px;top:258px;width:3px;height:3px;background:#b3b3b3"></div>
<div style="left:171px;top:264px;width:3px;height:3px;background:#b3b3b3"></div>
<div style="left:171px;top:270px;width:3px;height:3px;background:#b3b3b3"></div>
<div style="left:196px;top:249px;width:164px;height:35px;background:#fff;border:1px solid #c6c6c6"></div>
<svg style="position:absolute;left:215px;top:258px;overflow:visible;" width="17" height="16" viewBox="0 0 17 16"><path d="M1.5 1 L16 15.5 M16 1 L1.5 15.5" stroke="#c4c4c4" stroke-width="2.2" stroke-linecap="round"/></svg>
<svg style="position:absolute;left:269px;top:258px;overflow:visible;" width="20" height="17" viewBox="0 0 20 17"><path d="M1.5 9.5 L7 15 L18 2" fill="none" stroke="#c4c4c4" stroke-width="3" stroke-linejoin="round"/></svg>
<svg style="position:absolute;left:318px;top:252px" width="28" height="28"><text x="3" y="22" font-size="23" font-family="Liberation Serif" font-style="italic" fill="#5a5a5a" stroke="#5a5a5a" stroke-width="0.4">f</text><text x="12.5" y="22" font-size="15" font-family="Liberation Serif" font-style="italic" fill="#5a5a5a" stroke="#5a5a5a" stroke-width="0.4">x</text></svg>
<div style="left:364px;top:249px;width:1530px;height:35px;background:#fff;border:1px solid #c6c6c6"></div>
<svg style="position:absolute;left:379.80px;top:253.00px;overflow:visible" width="73.2" height="28.0"><text x="2" y="21.00" font-size="17.5" font-family="Liberation Sans" font-weight="normal" fill="#262626" textLength="69.22" lengthAdjust="spacingAndGlyphs" >Kiểm kể</text></svg>
<svg style="position:absolute;left:1885px;top:263px;overflow:visible;" width="8" height="9" viewBox="0 0 8 9"><path d="M1 1 L8 8" stroke="#6a6a6a" stroke-width="2.2"/></svg>
<div style="left:0px;top:299px;width:1892px;height:655px;background:#e6e6e6"></div>
<div style="left:32px;top:328px;width:1849px;height:625px;background:#fff"></div>
<div style="left:132px;top:299px;width:1px;height:28px;background:#ababab"></div>
<div style="left:236px;top:299px;width:1px;height:28px;background:#ababab"></div>
<div style="left:342px;top:299px;width:1px;height:28px;background:#ababab"></div>
<div style="left:498px;top:299px;width:1px;height:28px;background:#ababab"></div>
<div style="left:670px;top:299px;width:1px;height:28px;background:#ababab"></div>
<div style="left:846px;top:299px;width:1px;height:28px;background:#ababab"></div>
<div style="left:974px;top:299px;width:1px;height:28px;background:#ababab"></div>
<div style="left:1104px;top:299px;width:1px;height:28px;background:#ababab"></div>
<div style="left:1194px;top:299px;width:1px;height:28px;background:#ababab"></div>
<div style="left:1300px;top:299px;width:1px;height:28px;background:#ababab"></div>
<div style="left:1432px;top:299px;width:1px;height:28px;background:#ababab"></div>
<div style="left:1511px;top:299px;width:1px;height:28px;background:#ababab"></div>
<div style="left:1639px;top:299px;width:1px;height:28px;background:#ababab"></div>
<div style="left:1773px;top:299px;width:1px;height:28px;background:#ababab"></div>
<div style="left:1866px;top:299px;width:1px;height:28px;background:#ababab"></div>
<div style="left:1774px;top:299px;width:107px;height:28px;background:#d2d2d2"></div>
<div style="left:1866px;top:299px;width:1px;height:28px;background:#ababab"></div>
<div style="left:0px;top:327px;width:1881px;height:1px;background:#9e9e9e"></div>
<div style="left:31px;top:299px;width:1px;height:654px;background:#ababab"></div>
<svg style="position:absolute;left:7px;top:303px;overflow:visible;" width="22" height="21" viewBox="0 0 22 21"><path d="M21 0 V21 H0 Z" fill="#b4b4b4"/></svg>
<svg style="position:absolute;left:72.00px;top:302px;overflow:visible" width="21.0" height="26"><path d="M11.80 6 V20" stroke="#222" stroke-width="2"/><path d="M6.70 9.5 L12.30 6.1" stroke="#222" stroke-width="1.7"/></svg>
<svg style="position:absolute;left:174.50px;top:302px;overflow:visible" width="21.0" height="26"><text x="10.50" y="20" font-size="20" font-family="Liberation Sans" fill="#222" text-anchor="middle">2</text></svg>
<svg style="position:absolute;left:279.50px;top:302px;overflow:visible" width="21.0" height="26"><text x="10.50" y="20" font-size="20" font-family="Liberation Sans" fill="#222" text-anchor="middle">3</text></svg>
<svg style="position:absolute;left:410.50px;top:302px;overflow:visible" width="21.0" height="26"><text x="10.50" y="20" font-size="20" font-family="Liberation Sans" fill="#222" text-anchor="middle">4</text></svg>
<svg style="position:absolute;left:574.50px;top:302px;overflow:visible" width="21.0" height="26"><text x="10.50" y="20" font-size="20" font-family="Liberation Sans" fill="#222" text-anchor="middle">5</text></svg>
<svg style="position:absolute;left:748.50px;top:302px;overflow:visible" width="21.0" height="26"><text x="10.50" y="20" font-size="20" font-family="Liberation Sans" fill="#222" text-anchor="middle">6</text></svg>
<svg style="position:absolute;left:900.50px;top:302px;overflow:visible" width="21.0" height="26"><text x="10.50" y="20" font-size="20" font-family="Liberation Sans" fill="#222" text-anchor="middle">7</text></svg>
<svg style="position:absolute;left:1029.50px;top:302px;overflow:visible" width="21.0" height="26"><text x="10.50" y="20" font-size="20" font-family="Liberation Sans" fill="#222" text-anchor="middle">8</text></svg>
<svg style="position:absolute;left:1139.50px;top:302px;overflow:visible" width="21.0" height="26"><text x="10.50" y="20" font-size="20" font-family="Liberation Sans" fill="#222" text-anchor="middle">9</text></svg>
<svg style="position:absolute;left:1232.00px;top:302px;overflow:visible" width="32.0" height="26"><path d="M11.80 6 V20" stroke="#222" stroke-width="2"/><path d="M6.70 9.5 L12.30 6.1" stroke="#222" stroke-width="1.7"/><text x="21.50" y="20" font-size="20" font-family="Liberation Sans" fill="#222" text-anchor="middle">0</text></svg>
<svg style="position:absolute;left:1351.00px;top:302px;overflow:visible" width="32.0" height="26"><path d="M11.80 6 V20" stroke="#222" stroke-width="2"/><path d="M6.70 9.5 L12.30 6.1" stroke="#222" stroke-width="1.7"/><path d="M22.80 6 V20" stroke="#222" stroke-width="2"/><path d="M17.70 9.5 L23.30 6.1" stroke="#222" stroke-width="1.7"/></svg>
<svg style="position:absolute;left:1456.50px;top:302px;overflow:visible" width="32.0" height="26"><path d="M11.80 6 V20" stroke="#222" stroke-width="2"/><path d="M6.70 9.5 L12.30 6.1" stroke="#222" stroke-width="1.7"/><text x="21.50" y="20" font-size="20" font-family="Liberation Sans" fill="#222" text-anchor="middle">2</text></svg>
<svg style="position:absolute;left:1560.00px;top:302px;overflow:visible" width="32.0" height="26"><path d="M11.80 6 V20" stroke="#222" stroke-width="2"/><path d="M6.70 9.5 L12.30 6.1" stroke="#222" stroke-width="1.7"/><text x="21.50" y="20" font-size="20" font-family="Liberation Sans" fill="#222" text-anchor="middle">3</text></svg>
<svg style="position:absolute;left:1691.00px;top:302px;overflow:visible" width="32.0" height="26"><path d="M11.80 6 V20" stroke="#222" stroke-width="2"/><path d="M6.70 9.5 L12.30 6.1" stroke="#222" stroke-width="1.7"/><text x="21.50" y="20" font-size="20" font-family="Liberation Sans" fill="#222" text-anchor="middle">4</text></svg>
<svg style="position:absolute;left:1804.50px;top:302px;overflow:visible" width="32.0" height="26"><path d="M11.80 6 V20" stroke="#217346" stroke-width="2"/><path d="M6.70 9.5 L12.30 6.1" stroke="#217346" stroke-width="1.7"/><text x="21.50" y="20" font-size="20" font-family="Liberation Sans" fill="#217346" text-anchor="middle">5</text></svg>
<div style="left:0px;top:328px;width:30px;height:47px;background:#d2d2d2"></div>
<div style="left:32px;top:404px;width:1849px;height:1px;background:#d4d4d4"></div>
<div style="left:0px;top:404px;width:31px;height:1px;background:#ababab"></div>
<div style="left:32px;top:433px;width:1849px;height:1px;background:#d4d4d4"></div>
<div style="left:0px;top:433px;width:31px;height:1px;background:#ababab"></div>
<div style="left:32px;top:462px;width:1849px;height:1px;background:#d4d4d4"></div>
<div style="left:0px;top:462px;width:31px;height:1px;background:#ababab"></div>
<div style="left:32px;top:491px;width:1849px;height:1px;background:#d4d4d4"></div>
<div style="left:0px;top:491px;width:31px;height:1px;background:#ababab"></div>
<div style="left:32px;top:520px;width:1849px;height:1px;background:#d4d4d4"></div>
<div style="left:0px;top:520px;width:31px;height:1px;background:#ababab"></div>
<div style="left:32px;top:549px;width:1849px;height:1px;background:#d4d4d4"></div>
<div style="left:0px;top:549px;width:31px;height:1px;background:#ababab"></div>
<div style="left:32px;top:578px;width:1849px;height:1px;background:#d4d4d4"></div>
<div style="left:0px;top:578px;width:31px;height:1px;background:#ababab"></div>
<div style="left:32px;top:607px;width:1849px;height:1px;background:#d4d4d4"></div>
<div style="left:0px;top:607px;width:31px;height:1px;background:#ababab"></div>
<div style="left:32px;top:636px;width:1849px;height:1px;background:#d4d4d4"></div>
<div style="left:0px;top:636px;width:31px;height:1px;background:#ababab"></div>
<div style="left:32px;top:665px;width:1849px;height:1px;background:#d4d4d4"></div>
<div style="left:0px;top:665px;width:31px;height:1px;background:#ababab"></div>
<div style="left:32px;top:694px;width:1849px;height:1px;background:#d4d4d4"></div>
<div style="left:0px;top:694px;width:31px;height:1px;background:#ababab"></div>
<div style="left:32px;top:723px;width:1849px;height:1px;background:#d4d4d4"></div>
<div style="left:0px;top:723px;width:31px;height:1px;background:#ababab"></div>
<div style="left:32px;top:752px;width:1849px;height:1px;background:#d4d4d4"></div>
<div style="left:0px;top:752px;width:31px;height:1px;background:#ababab"></div>
<div style="left:32px;top:781px;width:1849px;height:1px;background:#d4d4d4"></div>
<div style="left:0px;top:781px;width:31px;height:1px;background:#ababab"></div>
<div style="left:32px;top:810px;width:1849px;height:1px;background:#d4d4d4"></div>
<div style="left:0px;top:810px;width:31px;height:1px;background:#ababab"></div>
<div style="left:32px;top:839px;width:1849px;height:1px;background:#d4d4d4"></div>
<div style="left:0px;top:839px;width:31px;height:1px;background:#ababab"></div>
<div style="left:32px;top:868px;width:1849px;height:1px;background:#d4d4d4"></div>
<div style="left:0px;top:868px;width:31px;height:1px;background:#ababab"></div>
<div style="left:32px;top:897px;width:1849px;height:1px;background:#d4d4d4"></div>
<div style="left:0px;top:897px;width:31px;height:1px;background:#ababab"></div>
<div style="left:32px;top:926px;width:1849px;height:1px;background:#d4d4d4"></div>
<div style="left:0px;top:926px;width:31px;height:1px;background:#ababab"></div>
<div style="left:132px;top:376px;width:1px;height:577px;background:#d4d4d4"></div>
<div style="left:236px;top:376px;width:1px;height:577px;background:#d4d4d4"></div>
<div style="left:342px;top:376px;width:1px;height:577px;background:#d4d4d4"></div>
<div style="left:498px;top:376px;width:1px;height:577px;background:#d4d4d4"></div>
<div style="left:670px;top:376px;width:1px;height:577px;background:#d4d4d4"></div>
<div style="left:846px;top:376px;width:1px;height:577px;background:#d4d4d4"></div>
<div style="left:974px;top:376px;width:1px;height:577px;background:#d4d4d4"></div>
<div style="left:1104px;top:376px;width:1px;height:577px;background:#d4d4d4"></div>
<div style="left:1194px;top:376px;width:1px;height:577px;background:#d4d4d4"></div>
<div style="left:1300px;top:376px;width:1px;height:577px;background:#d4d4d4"></div>
<div style="left:1432px;top:376px;width:1px;height:577px;background:#d4d4d4"></div>
<div style="left:1511px;top:376px;width:1px;height:577px;background:#d4d4d4"></div>
<div style="left:1639px;top:376px;width:1px;height:577px;background:#d4d4d4"></div>
<div style="left:1773px;top:376px;width:1px;height:577px;background:#d4d4d4"></div>
<div style="left:1866px;top:376px;width:1px;height:577px;background:#d4d4d4"></div>
<svg style="position:absolute;left:0.70px;top:349px;overflow:visible" width="21.0" height="26"><path d="M11.80 6 V20" stroke="#217346" stroke-width="2"/><path d="M6.70 9.5 L12.30 6.1" stroke="#217346" stroke-width="1.7"/></svg>
<svg style="position:absolute;left:1.10px;top:378px;overflow:visible" width="21.0" height="26"><text x="10.50" y="20" font-size="20" font-family="Liberation Sans" fill="#222" text-anchor="middle">2</text></svg>
<svg style="position:absolute;left:1.10px;top:407px;overflow:visible" width="21.0" height="26"><text x="10.50" y="20" font-size="20" font-family="Liberation Sans" fill="#222" text-anchor="middle">3</text></svg>
<svg style="position:absolute;left:1.10px;top:436px;overflow:visible" width="21.0" height="26"><text x="10.50" y="20" font-size="20" font-family="Liberation Sans" fill="#222" text-anchor="middle">4</text></svg>
<svg style="position:absolute;left:1.10px;top:465px;overflow:visible" width="21.0" height="26"><text x="10.50" y="20" font-size="20" font-family="Liberation Sans" fill="#222" text-anchor="middle">5</text></svg>
<svg style="position:absolute;left:1.10px;top:494px;overflow:visible" width="21.0" height="26"><text x="10.50" y="20" font-size="20" font-family="Liberation Sans" fill="#222" text-anchor="middle">6</text></svg>
<svg style="position:absolute;left:1.10px;top:523px;overflow:visible" width="21.0" height="26"><text x="10.50" y="20" font-size="20" font-family="Liberation Sans" fill="#222" text-anchor="middle">7</text></svg>
<svg style="position:absolute;left:1.10px;top:552px;overflow:visible" width="21.0" height="26"><text x="10.50" y="20" font-size="20" font-family="Liberation Sans" fill="#222" text-anchor="middle">8</text></svg>
<svg style="position:absolute;left:1.10px;top:581px;overflow:visible" width="21.0" height="26"><text x="10.50" y="20" font-size="20" font-family="Liberation Sans" fill="#222" text-anchor="middle">9</text></svg>
<svg style="position:absolute;left:-4.40px;top:610px;overflow:visible" width="32.0" height="26"><path d="M11.80 6 V20" stroke="#222" stroke-width="2"/><path d="M6.70 9.5 L12.30 6.1" stroke="#222" stroke-width="1.7"/><text x="21.50" y="20" font-size="20" font-family="Liberation Sans" fill="#222" text-anchor="middle">0</text></svg>
<svg style="position:absolute;left:-4.40px;top:639px;overflow:visible" width="32.0" height="26"><path d="M11.80 6 V20" stroke="#222" stroke-width="2"/><path d="M6.70 9.5 L12.30 6.1" stroke="#222" stroke-width="1.7"/><path d="M22.80 6 V20" stroke="#222" stroke-width="2"/><path d="M17.70 9.5 L23.30 6.1" stroke="#222" stroke-width="1.7"/></svg>
<svg style="position:absolute;left:-4.40px;top:668px;overflow:visible" width="32.0" height="26"><path d="M11.80 6 V20" stroke="#222" stroke-width="2"/><path d="M6.70 9.5 L12.30 6.1" stroke="#222" stroke-width="1.7"/><text x="21.50" y="20" font-size="20" font-family="Liberation Sans" fill="#222" text-anchor="middle">2</text></svg>
<svg style="position:absolute;left:-4.40px;top:697px;overflow:visible" width="32.0" height="26"><path d="M11.80 6 V20" stroke="#222" stroke-width="2"/><path d="M6.70 9.5 L12.30 6.1" stroke="#222" stroke-width="1.7"/><text x="21.50" y="20" font-size="20" font-family="Liberation Sans" fill="#222" text-anchor="middle">3</text></svg>
<svg style="position:absolute;left:-4.40px;top:726px;overflow:visible" width="32.0" height="26"><path d="M11.80 6 V20" stroke="#222" stroke-width="2"/><path d="M6.70 9.5 L12.30 6.1" stroke="#222" stroke-width="1.7"/><text x="21.50" y="20" font-size="20" font-family="Liberation Sans" fill="#222" text-anchor="middle">4</text></svg>
<svg style="position:absolute;left:-4.40px;top:755px;overflow:visible" width="32.0" height="26"><path d="M11.80 6 V20" stroke="#222" stroke-width="2"/><path d="M6.70 9.5 L12.30 6.1" stroke="#222" stroke-width="1.7"/><text x="21.50" y="20" font-size="20" font-family="Liberation Sans" fill="#222" text-anchor="middle">5</text></svg>
<svg style="position:absolute;left:-4.40px;top:784px;overflow:visible" width="32.0" height="26"><path d="M11.80 6 V20" stroke="#222" stroke-width="2"/><path d="M6.70 9.5 L12.30 6.1" stroke="#222" stroke-width="1.7"/><text x="21.50" y="20" font-size="20" font-family="Liberation Sans" fill="#222" text-anchor="middle">6</text></svg>
<svg style="position:absolute;left:-4.40px;top:813px;overflow:visible" width="32.0" height="26"><path d="M11.80 6 V20" stroke="#222" stroke-width="2"/><path d="M6.70 9.5 L12.30 6.1" stroke="#222" stroke-width="1.7"/><text x="21.50" y="20" font-size="20" font-family="Liberation Sans" fill="#222" text-anchor="middle">7</text></svg>
<svg style="position:absolute;left:-4.40px;top:842px;overflow:visible" width="32.0" height="26"><path d="M11.80 6 V20" stroke="#222" stroke-width="2"/><path d="M6.70 9.5 L12.30 6.1" stroke="#222" stroke-width="1.7"/><text x="21.50" y="20" font-size="20" font-family="Liberation Sans" fill="#222" text-anchor="middle">8</text></svg>
<svg style="position:absolute;left:-4.40px;top:871px;overflow:visible" width="32.0" height="26"><path d="M11.80 6 V20" stroke="#222" stroke-width="2"/><path d="M6.70 9.5 L12.30 6.1" stroke="#222" stroke-width="1.7"/><text x="21.50" y="20" font-size="20" font-family="Liberation Sans" fill="#222" text-anchor="middle">9</text></svg>
<svg style="position:absolute;left:-4.40px;top:900px;overflow:visible" width="32.0" height="26"><text x="10.50" y="20" font-size="20" font-family="Liberation Sans" fill="#222" text-anchor="middle">2</text><text x="21.50" y="20" font-size="20" font-family="Liberation Sans" fill="#222" text-anchor="middle">0</text></svg>
<svg style="position:absolute;left:-4.40px;top:929px;overflow:visible" width="32.0" height="26"><text x="10.50" y="20" font-size="20" font-family="Liberation Sans" fill="#222" text-anchor="middle">2</text><path d="M22.80 6 V20" stroke="#222" stroke-width="2"/><path d="M17.70 9.5 L23.30 6.1" stroke="#222" stroke-width="1.7"/></svg>
<div style="left:32px;top:328px;width:1849px;height:47px;background:#a9d08e"></div>
<div style="left:1867px;top:329px;width:14px;height:46px;background:#86a572"></div>
<div style="left:32px;top:375px;width:1849px;height:1px;background:#000"></div>
<div style="left:132px;top:328px;width:1px;height:48px;background:#000"></div>
<div style="left:236px;top:328px;width:1px;height:48px;background:#000"></div>
<div style="left:342px;top:328px;width:1px;height:48px;background:#000"></div>
<div style="left:498px;top:328px;width:1px;height:48px;background:#000"></div>
<div style="left:670px;top:328px;width:1px;height:48px;background:#000"></div>
<div style="left:846px;top:328px;width:1px;height:48px;background:#000"></div>
<div style="left:974px;top:328px;width:1px;height:48px;background:#000"></div>
<div style="left:1104px;top:328px;width:1px;height:48px;background:#000"></div>
<div style="left:1194px;top:328px;width:1px;height:48px;background:#000"></div>
<div style="left:1300px;top:328px;width:1px;height:48px;background:#000"></div>
<div style="left:1432px;top:328px;width:1px;height:48px;background:#000"></div>
<div style="left:1511px;top:328px;width:1px;height:48px;background:#000"></div>
<div style="left:1639px;top:328px;width:1px;height:48px;background:#000"></div>
<div style="left:1773px;top:328px;width:1px;height:48px;background:#000"></div>
<div style="left:1866px;top:328px;width:1px;height:48px;background:#000"></div>
<div style="left:0px;top:328px;width:1881px;height:47px;overflow:hidden">
<svg style="position:absolute;left:50.50px;top:-5.20px;overflow:visible" width="62.1" height="29.6"><text x="2" y="22.20" font-size="18.5" font-family="Liberation Sans" font-weight="bold" fill="#ff0000" textLength="58.13" lengthAdjust="spacingAndGlyphs" stroke="#ff0000" stroke-width="0.45">Mã tài</text></svg>
<svg style="position:absolute;left:64.40px;top:23.80px;overflow:visible" width="34.8" height="29.6"><text x="2" y="22.20" font-size="18.5" font-family="Liberation Sans" font-weight="bold" fill="#ff0000" textLength="30.78" lengthAdjust="spacingAndGlyphs" stroke="#ff0000" stroke-width="0.45">sản</text></svg>
<svg style="position:absolute;left:150.90px;top:-5.20px;overflow:visible" width="66.6" height="29.6"><text x="2" y="22.20" font-size="18.5" font-family="Liberation Sans" font-weight="bold" fill="#ff0000" textLength="62.62" lengthAdjust="spacingAndGlyphs" stroke="#ff0000" stroke-width="0.45">Tên tài</text></svg>
<svg style="position:absolute;left:167.30px;top:23.80px;overflow:visible" width="34.7" height="29.6"><text x="2" y="22.20" font-size="18.5" font-family="Liberation Sans" font-weight="bold" fill="#ff0000" textLength="30.68" lengthAdjust="spacingAndGlyphs" stroke="#ff0000" stroke-width="0.45">sản</text></svg>
<svg style="position:absolute;left:254.50px;top:-5.20px;overflow:visible" width="69.2" height="29.6"><text x="2" y="22.20" font-size="18.5" font-family="Liberation Sans" font-weight="bold" fill="#ff0000" textLength="65.16" lengthAdjust="spacingAndGlyphs" stroke="#ff0000" stroke-width="0.45">Loại tài</text></svg>
<svg style="position:absolute;left:271.20px;top:23.80px;overflow:visible" width="34.8" height="29.6"><text x="2" y="22.20" font-size="18.5" font-family="Liberation Sans" font-weight="bold" fill="#ff0000" textLength="30.78" lengthAdjust="spacingAndGlyphs" stroke="#ff0000" stroke-width="0.45">sản</text></svg>
<svg style="position:absolute;left:358.80px;top:-5.20px;overflow:visible" width="123.0" height="29.6"><text x="2" y="22.20" font-size="18.5" font-family="Liberation Sans" font-weight="bold" fill="#ff0000" textLength="118.98" lengthAdjust="spacingAndGlyphs" stroke="#ff0000" stroke-width="0.45">Mã Nhóm tài</text></svg>
<svg style="position:absolute;left:402.40px;top:23.80px;overflow:visible" width="34.4" height="29.6"><text x="2" y="22.20" font-size="18.5" font-family="Liberation Sans" font-weight="bold" fill="#ff0000" textLength="30.38" lengthAdjust="spacingAndGlyphs" stroke="#ff0000" stroke-width="0.45">sản</text></svg>
<svg style="position:absolute;left:524.00px;top:-5.20px;overflow:visible" width="120.0" height="29.6"><text x="2" y="22.20" font-size="18.5" font-family="Liberation Sans" font-weight="bold" fill="#000000" textLength="115.96" lengthAdjust="spacingAndGlyphs" stroke="#000000" stroke-width="0.45">Mã dòng sản</text></svg>
<svg style="position:absolute;left:557.20px;top:23.80px;overflow:visible" width="54.5" height="29.6"><text x="2" y="22.20" font-size="18.5" font-family="Liberation Sans" font-weight="bold" fill="#000000" textLength="50.54" lengthAdjust="spacingAndGlyphs" stroke="#000000" stroke-width="0.45">phẩm</text></svg>
<svg style="position:absolute;left:695.90px;top:-5.20px;overflow:visible" width="124.4" height="29.6"><text x="2" y="22.20" font-size="18.5" font-family="Liberation Sans" font-weight="bold" fill="#000000" textLength="120.45" lengthAdjust="spacingAndGlyphs" stroke="#000000" stroke-width="0.45">Tên dòng sản</text></svg>
<svg style="position:absolute;left:730.40px;top:23.80px;overflow:visible" width="55.9" height="29.6"><text x="2" y="22.20" font-size="18.5" font-family="Liberation Sans" font-weight="bold" fill="#000000" textLength="51.94" lengthAdjust="spacingAndGlyphs" stroke="#000000" stroke-width="0.45">phẩm</text></svg>
<svg style="position:absolute;left:874.70px;top:-5.20px;overflow:visible" width="70.3" height="29.6"><text x="2" y="22.20" font-size="18.5" font-family="Liberation Sans" font-weight="bold" fill="#000000" textLength="66.27" lengthAdjust="spacingAndGlyphs" stroke="#000000" stroke-width="0.45">Mã Sản</text></svg>
<svg style="position:absolute;left:882.90px;top:23.80px;overflow:visible" width="55.1" height="29.6"><text x="2" y="22.20" font-size="18.5" font-family="Liberation Sans" font-weight="bold" fill="#000000" textLength="51.14" lengthAdjust="spacingAndGlyphs" stroke="#000000" stroke-width="0.45">phẩm</text></svg>
<svg style="position:absolute;left:1003.40px;top:-5.20px;overflow:visible" width="72.9" height="29.6"><text x="2" y="22.20" font-size="18.5" font-family="Liberation Sans" font-weight="bold" fill="#000000" textLength="68.91" lengthAdjust="spacingAndGlyphs" stroke="#000000" stroke-width="0.45">Tên sản</text></svg>
<svg style="position:absolute;left:1011.80px;top:23.80px;overflow:visible" width="55.2" height="29.6"><text x="2" y="22.20" font-size="18.5" font-family="Liberation Sans" font-weight="bold" fill="#000000" textLength="51.24" lengthAdjust="spacingAndGlyphs" stroke="#000000" stroke-width="0.45">phẩm</text></svg>
<svg style="position:absolute;left:1106.00px;top:8.80px;overflow:visible" width="86.3" height="29.6"><text x="2" y="22.20" font-size="18.5" font-family="Liberation Sans" font-weight="bold" fill="#ff0000" textLength="82.27" lengthAdjust="spacingAndGlyphs" stroke="#ff0000" stroke-width="0.45">Số lượng</text></svg>
<svg style="position:absolute;left:1215.30px;top:-5.20px;overflow:visible" width="63.3" height="29.6"><text x="2" y="22.20" font-size="18.5" font-family="Liberation Sans" font-weight="bold" fill="#ff0000" textLength="59.28" lengthAdjust="spacingAndGlyphs" stroke="#ff0000" stroke-width="0.45">Đơn vị</text></svg>
<svg style="position:absolute;left:1227.50px;top:23.80px;overflow:visible" width="39.5" height="29.6"><text x="2" y="22.20" font-size="18.5" font-family="Liberation Sans" font-weight="bold" fill="#ff0000" textLength="35.50" lengthAdjust="spacingAndGlyphs" stroke="#ff0000" stroke-width="0.45">tính</text></svg>
<svg style="position:absolute;left:1323.20px;top:-5.20px;overflow:visible" width="86.3" height="29.6"><text x="2" y="22.20" font-size="18.5" font-family="Liberation Sans" font-weight="bold" fill="#000000" textLength="82.27" lengthAdjust="spacingAndGlyphs" stroke="#000000" stroke-width="0.45">Số lượng</text></svg>
<svg style="position:absolute;left:1343.80px;top:23.80px;overflow:visible" width="44.5" height="29.6"><text x="2" y="22.20" font-size="18.5" font-family="Liberation Sans" font-weight="bold" fill="#000000" textLength="40.54" lengthAdjust="spacingAndGlyphs" stroke="#000000" stroke-width="0.45">đếm</text></svg>
<svg style="position:absolute;left:1434.60px;top:8.80px;overflow:visible" width="73.1" height="29.6"><text x="2" y="22.20" font-size="18.5" font-family="Liberation Sans" font-weight="bold" fill="#ff0000" textLength="69.08" lengthAdjust="spacingAndGlyphs" stroke="#ff0000" stroke-width="0.45">Đơn giá</text></svg>
<svg style="position:absolute;left:1523.50px;top:-5.20px;overflow:visible" width="103.7" height="29.6"><text x="2" y="22.20" font-size="18.5" font-family="Liberation Sans" font-weight="bold" fill="#ff0000" textLength="99.71" lengthAdjust="spacingAndGlyphs" stroke="#ff0000" stroke-width="0.45">Đơn vị tiền</text></svg>
<svg style="position:absolute;left:1564.00px;top:23.80px;overflow:visible" width="21.9" height="29.6"><text x="2" y="22.20" font-size="18.5" font-family="Liberation Sans" font-weight="bold" fill="#ff0000" textLength="17.95" lengthAdjust="spacingAndGlyphs" stroke="#ff0000" stroke-width="0.45">tê</text></svg>
<svg style="position:absolute;left:1656.40px;top:-5.20px;overflow:visible" width="98.8" height="29.6"><text x="2" y="22.20" font-size="18.5" font-family="Liberation Sans" font-weight="bold" fill="#000000" textLength="94.85" lengthAdjust="spacingAndGlyphs" stroke="#000000" stroke-width="0.45">Mã tài sản</text></svg>
<svg style="position:absolute;left:1688.70px;top:23.80px;overflow:visible" width="34.5" height="29.6"><text x="2" y="22.20" font-size="18.5" font-family="Liberation Sans" font-weight="bold" fill="#000000" textLength="30.49" lengthAdjust="spacingAndGlyphs" stroke="#000000" stroke-width="0.45">cha</text></svg>
<svg style="position:absolute;left:1781.70px;top:8.80px;overflow:visible" width="76.0" height="29.6"><text x="2" y="22.20" font-size="18.5" font-family="Liberation Sans" font-weight="bold" fill="#ff0000" textLength="71.96" lengthAdjust="spacingAndGlyphs" stroke="#ff0000" stroke-width="0.45">Kiểm kể</text></svg>
</div>
<div style="left:1772px;top:326px;width:110px;height:2px;background:#217346"></div>
<div style="left:1772px;top:326px;width:2px;height:51px;background:#217346"></div>
<div style="left:1772px;top:375px;width:110px;height:2px;background:#217346"></div>
<div style="left:1774px;top:328px;width:92px;height:1px;background:#fff"></div>
<div style="left:1774px;top:328px;width:1px;height:47px;background:#fff"></div>
<div style="left:1774px;top:374px;width:92px;height:1px;background:#fff"></div>
<div style="left:30px;top:327px;width:2px;height:49px;background:#217346"></div>
<div style="left:1881px;top:299px;width:1px;height:655px;background:#9b9b9b"></div>
<div style="left:0px;top:953px;width:1882px;height:1px;background:#9b9b9b"></div>
<div style="left:1884px;top:300px;width:10px;height:25px;background:#fff;border:1px solid #a0a0a0"></div>
<div style="left:1884px;top:324px;width:10px;height:607px;background:#fff;border-left:1px solid #a0a0a0"></div>
<div style="left:1884px;top:930px;width:10px;height:25px;background:#fff;border:1px solid #a0a0a0"></div>
<div style="left:1889px;top:314px;width:3px;height:2px;background:#222"></div>
<div style="left:1889px;top:939px;width:3px;height:2px;background:#222"></div>
<div style="left:0px;top:954px;width:1882px;height:29px;background:#e6e6e6"></div>
<svg style="position:absolute;left:22px;top:963px;overflow:visible;" width="6" height="11" viewBox="0 0 6 11"><path d="M6 0 L0 5.5 L6 11 Z" fill="#c0c0c0"/></svg>
<svg style="position:absolute;left:57px;top:963px;overflow:visible;" width="6" height="11" viewBox="0 0 6 11"><path d="M0 0 L6 5.5 L0 11 Z" fill="#c0c0c0"/></svg>
<div style="left:110px;top:953px;width:76px;height:30px;background:#fff;border-left:1px solid #9b9b9b;border-right:1px solid #9b9b9b"></div>
<div style="left:111px;top:981px;width:74px;height:2px;background:#217346"></div>
<svg style="position:absolute;left:120.00px;top:951.90px;overflow:visible" width="54.7" height="30.4"><text x="2" y="22.80" font-size="19" font-family="Liberation Sans" font-weight="bold" fill="#217346" textLength="50.65" lengthAdjust="spacingAndGlyphs" >Asset</text></svg>
<svg style="position:absolute;left:199.50px;top:951.60px;overflow:visible" width="74.5" height="31.2"><text x="2" y="23.40" font-size="19.5" font-family="Liberation Sans" font-weight="normal" fill="#444" textLength="70.48" lengthAdjust="spacingAndGlyphs" >Init data</text></svg>
<div style="left:288px;top:957px;width:1px;height:26px;background:#9b9b9b"></div>
<svg style="position:absolute;left:327px;top:957px;overflow:visible;" width="24" height="24" viewBox="0 0 24 24"><circle cx="12" cy="12" r="10.7" fill="none" stroke="#666" stroke-width="1.3"/><path d="M12 6.5 V17.5 M6.5 12 H17.5" stroke="#666" stroke-width="1.5"/></svg>
<div style="left:1140px;top:962px;width:3px;height:3px;background:#b3b3b3"></div>
<div style="left:1140px;top:968px;width:3px;height:3px;background:#b3b3b3"></div>
<div style="left:1140px;top:974px;width:3px;height:3px;background:#b3b3b3"></div>
<div style="left:1160px;top:954px;width:722px;height:29px;background:#f0f0f0"></div>
<div style="left:1160px;top:957px;width:26px;height:25px;background:#fff;border:1px solid #a0a0a0"></div>
<svg style="position:absolute;left:1168.5px;top:964px;overflow:visible;" width="6.5" height="11" viewBox="0 0 6.5 11"><path d="M6.5 0 L0 5.5 L6.5 11 Z" fill="#222"/></svg>
<div style="left:1184px;top:957px;width:110px;height:25px;background:#fff;border:1px solid #a0a0a0;border-left-width:2px"></div>
<div style="left:1858px;top:957px;width:25px;height:25px;background:#fff;border:1px solid #a0a0a0"></div>
<svg style="position:absolute;left:1867px;top:964px;overflow:visible;" width="7" height="11" viewBox="0 0 7 11"><path d="M0 0 L7 5.5 L0 11 Z" fill="#222"/></svg>
</body></html>
